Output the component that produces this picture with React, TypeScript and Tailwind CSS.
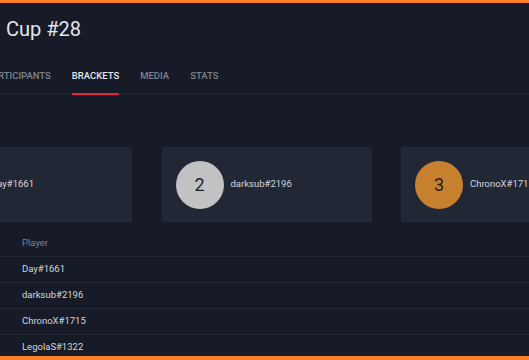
import React from 'react';

const tabs = ['PARTICIPANTS', 'BRACKETS', 'MEDIA', 'STATS'];

const podium = [
  {place: 1, name: 'Day#1661', circle: 'bg-[#e0b43a]'},
  {place: 2, name: 'darksub#2196', circle: 'bg-[#c2c2c2]'},
  {place: 3, name: 'ChronoX#1715', circle: 'bg-[#c7802e]'},
];

const players = ['Day#1661', 'darksub#2196', 'ChronoX#1715', 'LegolaS#1322'];

const App = () => {
  return (
    <div className="flex h-[360px] w-[529px] flex-col overflow-hidden bg-[#161b27] font-['Roboto','Liberation_Sans',sans-serif]">
      <div className="h-[3px] shrink-0 bg-[#ff7f27]"/>
      <main className="flex-1 overflow-hidden">
        <h1 className="pl-[6px] pt-[12px] text-[20px] leading-[28px] text-[#e3e5ea] whitespace-nowrap">Cup #28</h1>

        <nav className="mt-[14px] flex border-b-2 border-[#1e2330]">
          <div className="ml-[-13.6px] flex gap-[21px]">
            {tabs.map(tab => (
              <div
                key={tab}
                className={`-mb-[2px] pt-[12px] pb-[10px] text-[9.5px] leading-[14px] font-medium whitespace-nowrap border-b-2 ${
                  tab === 'BRACKETS' ? 'border-[#e5233f] text-[#e6e8ec]' : 'border-transparent text-[#7d828e]'
                }`}
              >
                {tab}
              </div>
            ))}
          </div>
        </nav>

        <section className="mt-[52px] ml-[-78px] flex gap-[29.5px]">
          {podium.map(p => (
            <div key={p.place} className="flex h-[75px] w-[210px] shrink-0 items-center bg-[#222736] pl-[14px]">
              <div className={`flex h-[48px] w-[48px] shrink-0 items-center justify-center rounded-full text-[18px] text-[#1b1e25] ${p.circle}`}>
                {p.place}
              </div>
              <span className="ml-[7px] text-[9.5px] text-[#d3d6dc] whitespace-nowrap">{p.name}</span>
            </div>
          ))}
        </section>

        <table className="mt-[8px] w-full border-collapse text-left text-[9.5px]">
          <thead>
            <tr className="h-[26px] border-b border-[#232835]">
              <th className="pl-[22px] font-normal text-[#7a808d]">Player</th>
            </tr>
          </thead>
          <tbody>
            {players.map(name => (
              <tr key={name} className="h-[26px] border-b border-[#232835]">
                <td className="pl-[22px] text-[#d3d6dc]">{name}</td>
              </tr>
            ))}
          </tbody>
        </table>
      </main>
      <div className="h-[4px] shrink-0 bg-[#ff7f27]"/>
    </div>
  );
};

export default App;
